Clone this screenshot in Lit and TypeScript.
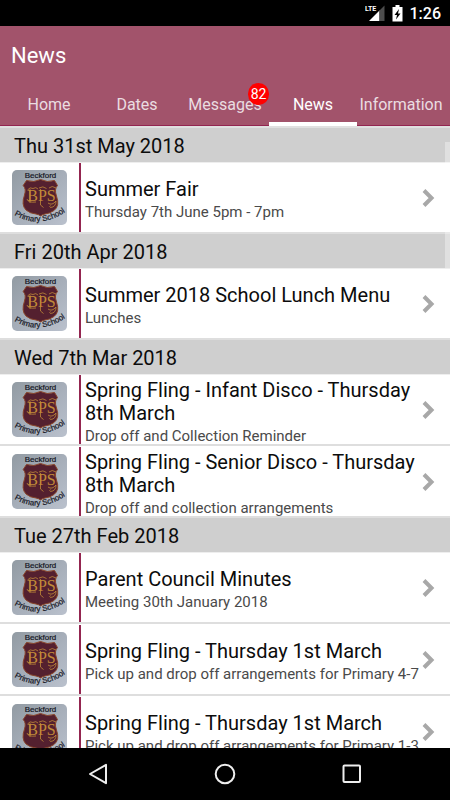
import { LitElement, html, css } from "lit";
import { customElement } from "lit/decorators.js";
import { classMap } from "lit/directives/class-map.js";

interface NewsItem {
  title: string;
  summary: string;
}

interface NewsGroup {
  date: string;
  items: NewsItem[];
}

const TABS = [
  { label: "Home" },
  { label: "Dates" },
  { label: "Messages", unread: 82 },
  { label: "News", active: true },
  { label: "Information" },
];

const GROUPS: NewsGroup[] = [
  {
    date: "Thu 31st May 2018",
    items: [{ title: "Summer Fair", summary: "Thursday 7th June 5pm - 7pm" }],
  },
  {
    date: "Fri 20th Apr 2018",
    items: [{ title: "Summer 2018 School Lunch Menu", summary: "Lunches" }],
  },
  {
    date: "Wed 7th Mar 2018",
    items: [
      { title: "Spring Fling - Infant Disco - Thursday 8th March", summary: "Drop off and Collection Reminder" },
      { title: "Spring Fling - Senior Disco - Thursday 8th March", summary: "Drop off and collection arrangements" },
    ],
  },
  {
    date: "Tue 27th Feb 2018",
    items: [
      { title: "Parent Council Minutes", summary: "Meeting 30th January 2018" },
      { title: "Spring Fling - Thursday 1st March", summary: "Pick up and drop off arrangements for Primary 4-7" },
      { title: "Spring Fling - Thursday 1st March", summary: "Pick up and drop off arrangements for Primary 1-3" },
    ],
  },
];

@customElement("school-crest")
export class SchoolCrest extends LitElement {
  static styles = css`
    :host {
      display: block;
      width: 55px;
      height: 55px;
      border-radius: 5px;
      overflow: hidden;
    }
    .crest {
      display: block;
    }
    .name {
      font-family: "Liberation Sans", Arial, sans-serif;
      font-size: 8px;
      fill: #15161f;
      stroke: #15161f;
      stroke-width: 0.2px;
    }
    .initials {
      font-family: "Liberation Serif", "Times New Roman", serif;
      font-size: 16px;
      fill: #c08a38;
    }
  `;

  render() {
    return html`
      <svg class="crest" width="55" height="55" viewBox="0 0 55 55" role="img" aria-label="Beckford Primary School">
        <defs>
          <linearGradient id="card" x1="0" y1="0" x2="1" y2="1">
            <stop offset="0" stop-color="#929ba3" />
            <stop offset="0.5" stop-color="#a6aeb9" />
            <stop offset="1" stop-color="#bac1cd" />
          </linearGradient>
          <path id="arc" d="M0 43.500 Q27 61 55.500 40.500" />
        </defs>
        <rect width="55" height="55" fill="url(#card)" />
        <path
          d="M14.5 10.500 Q22 13 28.500 9.500 Q35 13 42.500 10.500 L45.500 15.500 Q42 19 44.500 26 Q48 36 42 40.500 Q38 43.500 33 44 Q30 44.500 28.500 46 Q27 44.500 24 44 Q18 43.500 14 40 Q9 35 12.500 25 Q14.500 19 11.200 15.500 Z"
          fill="#54202f"
          stroke="#8a4428"
          stroke-width="1"
        />
        <text class="name" x="28.500" y="8" text-anchor="middle">Beckford</text>
        <text class="initials" x="29.500" y="31" text-anchor="middle">BPS</text>
        <path
          d="M15.500 20 Q18 16.500 21 18.500 Q24 16.500 26 19 M18 19 V33 M15 29 Q16 33 24 32 M27 18 Q31 15.500 34.500 18.500 M28.500 19 V35 L31.500 37.500 M37 18 Q40 15 44 18 M36 33 Q40 36 44 31 Q44 37 38.500 37.500 Q37 36.500 38.500 35.500"
          fill="none"
          stroke="#c08a38"
          stroke-width="0.800"
        />
        <text class="name" text-anchor="middle"><textPath href="#arc" startOffset="50%">Primary School</textPath></text>
      </svg>
    `;
  }
}

@customElement("app-root")
export class AppRoot extends LitElement {
  static styles = css`
    :host {
      display: flex;
      flex-direction: column;
      height: 100vh;
      overflow: hidden;
      background: #fff;
      color: #0c0c0c;
      font-family: Roboto, "Noto Sans", sans-serif;
    }
    a {
      color: inherit;
      text-decoration: none;
    }
    .status {
      display: flex;
      align-items: center;
      justify-content: flex-end;
      gap: 7px;
      flex: none;
      height: 26px;
      padding-right: 9px;
      background: #000;
      color: #fff;
      font-size: 16px;
      font-weight: 500;
    }
    .status svg {
      display: block;
    }
    .lte {
      font-family: Roboto, sans-serif;
      font-size: 7px;
      font-weight: 700;
      fill: #fff;
    }
    .top {
      flex: none;
      background: #a2536b;
      color: #fff;
      border-bottom: 1px solid #932550;
    }
    .heading {
      margin: 0;
      padding-left: 11px;
      font-size: 22px;
      font-weight: 400;
      line-height: 60px;
    }
    .tabs {
      display: grid;
      grid-template-columns: repeat(5, 1fr);
      padding: 0 5px;
      height: 39px;
    }
    .tab {
      display: flex;
      justify-content: center;
      position: relative;
      box-sizing: border-box;
      height: 40px;
      font-size: 16px;
      line-height: 38px;
      white-space: nowrap;
      color: #eadde1;
    }
    .tab.active {
      color: #fff;
      border-bottom: 4px solid #fff;
    }
    .badge {
      position: absolute;
      top: -3px;
      right: 0;
      min-width: 21px;
      border-radius: 11px;
      background: #f00;
      color: #fff;
      font-size: 14px;
      line-height: 22px;
      text-align: center;
    }
    .feed {
      position: relative;
      flex: 1;
      min-height: 0;
      overflow: hidden;
      border-top: 2px solid #e0e0e0;
    }
    .scrollbar {
      position: absolute;
      top: 14px;
      right: 0;
      width: 5px;
      height: 126px;
      background: rgba(255, 255, 255, 0.35);
    }
    .date {
      margin: 0;
      padding: 2px 0 0 14px;
      background: #cfcfcf;
      border-bottom: 1px solid #eee;
      font-size: 20px;
      font-weight: 400;
      line-height: 32px;
    }
    .items {
      display: grid;
      row-gap: 1px;
      margin: 0;
      padding: 0;
      list-style: none;
    }
    .item {
      display: grid;
      grid-template-columns: 67px 2px 1fr 13px;
      grid-template-rows: 100%;
      align-items: center;
      box-sizing: border-box;
      height: 71px;
      padding: 0 15px 0 12px;
      border-bottom: 2px solid #dedede;
    }
    .bar {
      align-self: stretch;
      background: #932550;
    }
    .text {
      display: grid;
      padding: 6px 0 0 4px;
    }
    .title {
      font-size: 20px;
      line-height: 23px;
    }
    .summary {
      font-size: 15px;
      line-height: 22px;
      color: #4a4a4a;
      white-space: nowrap;
    }
    .system {
      display: flex;
      align-items: center;
      justify-content: center;
      gap: 104px;
      flex: none;
      height: 52px;
      background: #000;
    }
    .key {
      display: block;
      padding: 0;
      border: 0;
      background: none;
    }
    .key svg {
      display: block;
    }
  `;

  private renderItem(item: NewsItem) {
    return html`
      <li>
        <a class="item" href="#">
          <school-crest></school-crest>
          <span class="bar"></span>
          <span class="text">
            <span class="title">${item.title}</span>
            <span class="summary">${item.summary}</span>
          </span>
          <svg width="13" height="20" viewBox="0 0 13 20" aria-hidden="true">
            <path d="M2 2.500 L9.500 10 L2 17.500" fill="none" stroke="#a8a8a8" stroke-width="4" />
          </svg>
        </a>
      </li>
    `;
  }

  render() {
    return html`
      <div class="status">
        <svg width="20" height="18" viewBox="0 0 20 18" role="img" aria-label="LTE signal">
          <path d="M19.500 1.500 V17 H4 Z" fill="#fff" />
          <path d="M14.500 0 H20 V18 H14.500 Z" fill="#000" />
          <path d="M19.500 1.500 V17 H14.500 V6.500 Z" fill="#4d4d4d" />
          <path d="M0 0 H12 V8 H0 Z" fill="#000" />
          <text class="lte" x="0" y="7">LTE</text>
        </svg>
        <svg width="11" height="17" viewBox="0 0 11 17" role="img" aria-label="Battery charging">
          <path d="M3.500 0 H7.500 V2 H10.500 V16.500 H0.500 V2 H3.500 Z" fill="#fff" />
          <path d="M7 4 L2.500 10 H5 L4 14.500 L8.500 8.500 H6 Z" fill="#000" />
        </svg>
        <span>1:26</span>
      </div>
      <header class="top">
        <h1 class="heading">News</h1>
        <nav class="tabs">
          ${TABS.map(
            (tab) => html`
              <a class=${classMap({ tab: true, active: !!tab.active })} href="#">
                ${tab.label}${tab.unread ? html`<span class="badge">${tab.unread}</span>` : ""}
              </a>
            `,
          )}
        </nav>
      </header>
      <main class="feed">
        ${GROUPS.map(
          (group) => html`
            <section>
              <h2 class="date">${group.date}</h2>
              <ul class="items">
                ${group.items.map((item) => this.renderItem(item))}
              </ul>
            </section>
          `,
        )}
        <div class="scrollbar"></div>
      </main>
      <footer class="system">
        <button class="key" aria-label="Back">
          <svg width="22" height="22" viewBox="0 0 22 22">
            <path d="M18 1.800 V20.200 L2 11 Z" fill="none" stroke="#eee" stroke-width="2" stroke-linejoin="round" />
          </svg>
        </button>
        <button class="key" aria-label="Home">
          <svg width="22" height="22" viewBox="0 0 22 22">
            <circle cx="11" cy="11" r="9.300" fill="none" stroke="#eee" stroke-width="2" />
          </svg>
        </button>
        <button class="key" aria-label="Recent apps">
          <svg width="22" height="22" viewBox="0 0 22 22">
            <rect x="3.500" y="2.500" width="16.500" height="16.500" rx="1" fill="none" stroke="#eee" stroke-width="2" />
          </svg>
        </button>
      </footer>
    `;
  }
}
